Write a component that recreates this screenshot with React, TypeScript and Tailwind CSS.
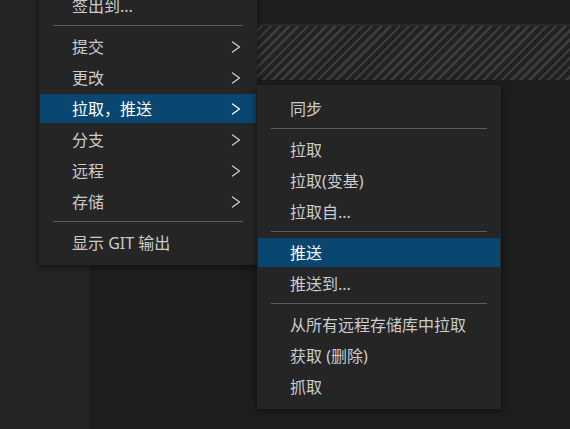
import React from "react";

type Item =
  | { kind: "sep" }
  | { kind: "item"; label: string; sub?: boolean; active?: boolean };

const mainMenu: Item[] = [
  { kind: "item", label: "签出到..." },
  { kind: "sep" },
  { kind: "item", label: "提交", sub: true },
  { kind: "item", label: "更改", sub: true },
  { kind: "item", label: "拉取，推送", sub: true, active: true },
  { kind: "item", label: "分支", sub: true },
  { kind: "item", label: "远程", sub: true },
  { kind: "item", label: "存储", sub: true },
  { kind: "sep" },
  { kind: "item", label: "显示 GIT 输出" },
];

const pullPushMenu: Item[] = [
  { kind: "item", label: "同步" },
  { kind: "sep" },
  { kind: "item", label: "拉取" },
  { kind: "item", label: "拉取(变基)" },
  { kind: "item", label: "拉取自..." },
  { kind: "sep" },
  { kind: "item", label: "推送", active: true },
  { kind: "item", label: "推送到..." },
  { kind: "sep" },
  { kind: "item", label: "从所有远程存储库中拉取" },
  { kind: "item", label: "获取 (删除)" },
  { kind: "item", label: "抓取" },
];

function Chevron() {
  return (
    <svg className="h-[12px] w-[10px]" viewBox="0 0 10 12" fill="none">
      <polyline
        points="1.5,1 8.5,6 1.5,11"
        stroke="currentColor"
        strokeWidth={1.3}
        strokeLinecap="round"
        strokeLinejoin="round"
      />
    </svg>
  );
}

function MenuList({ items }: { items: Item[] }) {
  return (
    <>
      {items.map((it, i) =>
        it.kind === "sep" ? (
          <div key={i} className="h-[10px] px-[14px] pt-[4px]">
            <div className="h-px bg-[#5c5c5c]" />
          </div>
        ) : (
          <div key={i} className="h-[31px] px-px py-px">
            <div
              className={
                it.active
                  ? "flex h-full items-center bg-[#094771] pl-[32px] pr-[15px] text-white"
                  : "flex h-full items-center pl-[32px] pr-[15px] text-[#cccccc]"
              }
            >
              <span className="flex-1 whitespace-nowrap leading-none">{it.label}</span>
              {it.sub && <Chevron />}
            </div>
          </div>
        )
      )}
    </>
  );
}

export default function App() {
  return (
    <div className="relative flex h-[429px] w-[570px] overflow-hidden bg-[#1e1e1e] font-['Noto_Sans','Noto_Sans_CJK_SC',sans-serif] text-[16px]">
      <div className="w-[89px] shrink-0 bg-[#252526]" />
      <div className="flex flex-1 flex-col">
        <div className="h-[24px] bg-[#1f1f1f]" />
        <div className="h-[2px] bg-[#2a2a2a]" />
        <div className="h-[54px] bg-[#222222] bg-[repeating-linear-gradient(135deg,#222222_0px,#222222_4px,#3c3c3c_4px,#3c3c3c_6.5px)]" />
        <div className="flex-1 bg-[#1e1e1e]" />
      </div>

      <div className="absolute left-[39px] top-[-18px] w-[218px] bg-[#252526] pt-[8px] pb-[7px] shadow-[0_2px_8px_rgba(0,0,0,0.55)]">
        <MenuList items={mainMenu} />
      </div>

      <div className="absolute left-[257px] top-[85px] w-[244px] bg-[#252526] pt-[8px] pb-[7px] shadow-[0_2px_8px_rgba(0,0,0,0.55)]">
        <MenuList items={pullPushMenu} />
      </div>
    </div>
  );
}
